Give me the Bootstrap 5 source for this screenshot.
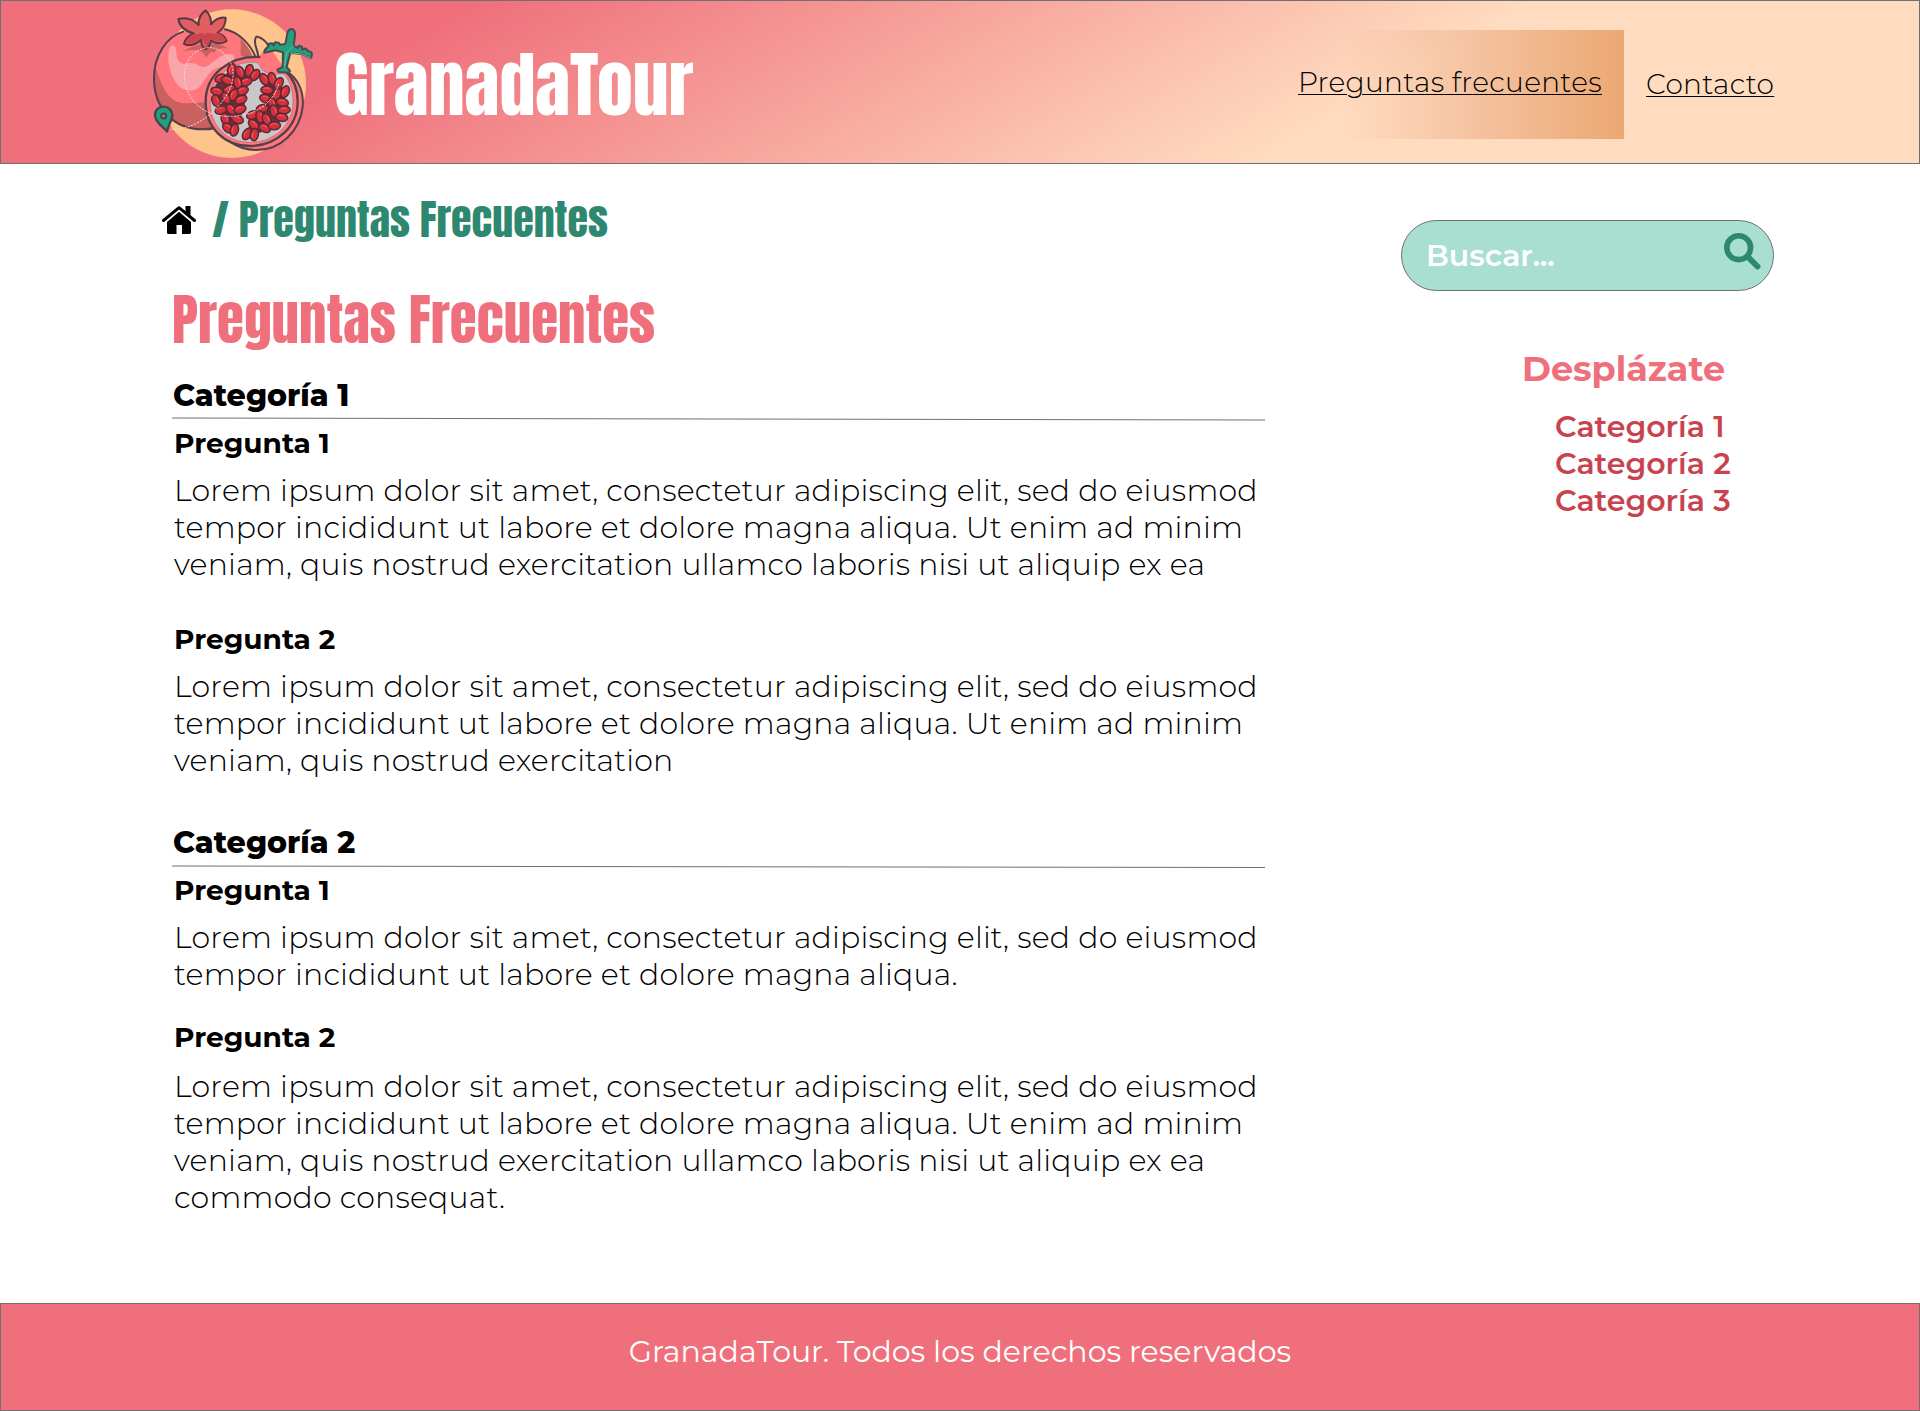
<!doctype html>
<html lang="es">
<head>
<meta charset="utf-8">
<meta name="viewport" content="width=device-width, initial-scale=1">
<title>GranadaTour - Preguntas Frecuentes</title>
<link href="https://cdn.jsdelivr.net/npm/bootstrap@5.3.0/dist/css/bootstrap.min.css" rel="stylesheet">
<style>
body{font-family:Montserrat,Inter,"Liberation Sans",sans-serif;font-size:30px;line-height:37px;color:#000;background:#fff;min-height:1411px}
.display-face{font-family:Anton,Roboto,"Liberation Sans",sans-serif;font-weight:400;white-space:nowrap}
.site-head{height:164px;border:1px solid #707070;background:linear-gradient(150deg,#ef707c 22%,#ffdcc0 70%);padding:0 145px 0 139px}
.brand-name{font-size:72px;line-height:100px;margin-left:4px;margin-top:6px}
.nav-item-box{font-size:28px;font-weight:300;letter-spacing:.3px;color:#000;text-decoration:underline;text-decoration-thickness:1px;text-underline-offset:2px;white-space:nowrap}
.nav-item-box:hover{color:#000}
.nav-on{height:109px;width:348px;padding:0 0 4px 22px;margin-top:5px;background:linear-gradient(90deg,rgba(236,170,130,0) 19%,rgba(236,172,132,.5) 55%,rgba(235,168,115,1))}
.nav-off{margin-left:22px;width:128px;margin-top:5px}
.page-main{height:1139px;padding:26px 146px 0 162px}
.faq-col{width:1103px}
.crumb{height:60px}
.crumb-text{font-size:42px;line-height:60px;color:#2e8870;margin-left:16px}
.page-title{font-size:55px;line-height:80px;color:#ef707c;margin:30px 0 17px -2px}
.faq-body{padding-left:12px}
.cat-title{font-size:30px;line-height:37px;font-weight:800;margin:0 0 0 -1px}
.cat-rule{display:block;margin:3px 0 4px -2px}
.q-title{font-size:28px;line-height:37px;font-weight:700;margin:0 0 10px}
.answer{margin:0;white-space:nowrap;font-weight:300;letter-spacing:.21px}
.answer span{display:block}
.side-col{width:373px;padding-top:30px}
.search-pill{height:71px;border:1px solid #707070;border-radius:36px;background:#a8dfd1;padding:0 12px 0 24px;color:#fff;font-weight:600}
.side-title{font-size:35px;line-height:44px;font-weight:700;color:#ef707c;margin:56px 0 17px 121px}
.side-list{margin:0 0 0 154px;font-weight:600}
.side-list a{color:#c8434f;text-decoration:none}
.site-foot{height:108px;border:1px solid #707070;background:#ef707c;color:#fff;padding-top:29px}
</style>
<script src="https://cdn.jsdelivr.net/npm/bootstrap@5.3.0/dist/js/bootstrap.bundle.min.js"></script>
</head>
<body>
<header class="site-head d-flex align-items-center justify-content-between">
  <a href="#" class="d-flex align-items-center text-white text-decoration-none">
    <svg width="190" height="164" viewBox="0 0 570 492" fill="none" stroke-linejoin="round" stroke-linecap="round">
      <defs>
        <clipPath id="fruitClip"><path d="M130 95C80 110 42 165 42 235C42 320 95 388 190 388C285 388 350 320 350 230C350 160 300 90 235 82Z"/></clipPath>
        <g id="seed"><ellipse rx="18.5" ry="12" fill="#d7303c" stroke="#5a2b35" stroke-width="4.5"/><path d="M-9 -4Q-2 -8 6 -5" stroke="#ec6269" stroke-width="3"/></g>
      </defs>
      <circle cx="275" cy="251" r="223" fill="#ffc48c"/>
      <g clip-path="url(#fruitClip)">
        <rect x="30" y="70" width="330" height="330" fill="#ff777c"/>
        <path d="M42 190C60 240 75 290 110 305C150 318 180 300 240 310L240 400L30 400Z" fill="#cb6061"/>
        <path d="M302 100L302 165L350 190L350 120Z" fill="#cb6061"/>
        <path d="M128 155C165 130 235 120 262 145C240 143 225 148 222 160C212 150 206 160 199 174C190 150 165 145 128 155Z" fill="#cb6061"/>
        <path d="M88 145C95 130 108 135 109 155C110 185 122 195 145 190C170 185 178 205 195 200C220 195 240 155 275 163C300 175 260 200 240 202C200 210 195 250 175 265C150 280 115 270 100 235C85 205 82 170 88 145Z" fill="#f9a5aa"/>
      </g>
      <path d="M130 95C80 110 42 165 42 235C42 320 95 388 190 388C215 388 230 385 250 378M255 88C295 97 330 130 346 170" stroke="#54404b" stroke-width="6"/>
      <path d="M355 172L384 135L440 215L380 240Z" fill="#ff777c"/>
      <path d="M354 170C356 158 345 142 345 125C345 112 349 109 352 110C364 112 378 124 384 135" stroke="#54404b" stroke-width="6"/>
      <path d="M440 215C475 235 492 275 488 320C480 395 420 450 350 450C320 450 295 443 270 425" fill="#ff777c" stroke="#54404b" stroke-width="6"/>
      <path d="M354 171C270 168 197 220 197 305C197 385 255 438 330 438C410 438 473 380 473 305C473 268 461 236 437 214C415 218 400 214 390 200C370 170 372 172 354 171Z" fill="#ff777c"/>
      <path d="M358 171C270 168 197 220 197 305C197 385 255 438 330 438C410 438 473 380 473 305C473 268 461 236 437 214" stroke="#54404b" stroke-width="7"/>
      <path d="M340 186C265 188 211 235 211 307C211 380 262 427 330 427C405 427 459 372 459 305C459 270 450 240 430 221C400 225 375 220 365 208C358 195 358 187 340 186Z" fill="#cbc6c9" stroke="#b8666f" stroke-width="2"/>
      <path d="M268 212Q300 200 342 222L322 258L312 330L290 385L262 385L238 340L225 300L226 255Z" fill="#6a2f3a"/>
      <path d="M372 240L405 236L432 270L436 340L410 380L340 405L318 400L342 345L378 318Z" fill="#6a2f3a"/>
      <g>
        <use href="#seed" transform="translate(275 209) rotate(-75)"/><use href="#seed" transform="translate(300 216) rotate(65)"/><use href="#seed" transform="translate(328 212) rotate(100)"/><use href="#seed" transform="translate(345 225) rotate(-55)"/>
        <use href="#seed" transform="translate(243 235) rotate(-20)"/><use href="#seed" transform="translate(262 241) rotate(20)"/><use href="#seed" transform="translate(318 245) rotate(-20)"/><use href="#seed" transform="translate(293 248) rotate(75)"/>
        <use href="#seed" transform="translate(231 274) rotate(15)"/><use href="#seed" transform="translate(267 268) rotate(-25)"/><use href="#seed" transform="translate(307 272) rotate(-20)"/><use href="#seed" transform="translate(228 302) rotate(70)"/>
        <use href="#seed" transform="translate(258 294) rotate(65)"/><use href="#seed" transform="translate(281 284) rotate(-65)"/><use href="#seed" transform="translate(303 299) rotate(-25)"/><use href="#seed" transform="translate(243 330) rotate(-20)"/>
        <use href="#seed" transform="translate(273 328) rotate(50)"/><use href="#seed" transform="translate(300 328) rotate(-20)"/><use href="#seed" transform="translate(256 357) rotate(75)"/><use href="#seed" transform="translate(292 358) rotate(20)"/>
        <use href="#seed" transform="translate(264 384) rotate(40)"/><use href="#seed" transform="translate(283 390) rotate(-75)"/>
        <use href="#seed" transform="translate(373 238) rotate(60)"/><use href="#seed" transform="translate(396 236) rotate(75)"/><use href="#seed" transform="translate(416 250) rotate(-60)"/><use href="#seed" transform="translate(381 270) rotate(5)"/>
        <use href="#seed" transform="translate(435 275) rotate(-65)"/><use href="#seed" transform="translate(410 283) rotate(-70)"/><use href="#seed" transform="translate(377 296) rotate(20)"/><use href="#seed" transform="translate(397 312) rotate(75)"/>
        <use href="#seed" transform="translate(427 307) rotate(15)"/><use href="#seed" transform="translate(432 330) rotate(-5)"/><use href="#seed" transform="translate(367 326) rotate(-15)"/><use href="#seed" transform="translate(402 333) rotate(75)"/>
        <use href="#seed" transform="translate(338 345) rotate(-20)"/><use href="#seed" transform="translate(360 350) rotate(80)"/><use href="#seed" transform="translate(380 358) rotate(65)"/><use href="#seed" transform="translate(425 352) rotate(10)"/>
        <use href="#seed" transform="translate(341 374) rotate(45)"/><use href="#seed" transform="translate(374 384) rotate(25)"/><use href="#seed" transform="translate(403 377) rotate(-5)"/><use href="#seed" transform="translate(321 402) rotate(-60)"/><use href="#seed" transform="translate(343 404) rotate(-80)"/>
      </g>
      <path d="M197 31C209 43 214 58 213 73C226 57 242 51 257 53C258 72 247 89 232 99C246 102 256 112 260 123C246 133 227 131 213 122C211 131 205 142 198 148C187 142 183 131 183 119C168 137 147 138 132 132C134 117 147 104 162 101C138 94 118 79 115 57C136 52 159 57 176 75C174 58 183 41 197 31Z" fill="#e15e63" stroke="#5a3842" stroke-width="6"/>
      <path d="M162 101C177 108 184 90 194 104C205 91 217 106 232 99C246 102 252 111 258 121C243 127 227 124 213 117L199 142L185 114C170 130 150 133 137 129C140 116 150 106 162 101Z" fill="#ca464d"/>
      <path d="M95 388C170 390 248 325 274 256C296 185 244 140 205 143C160 146 132 185 133 230C137 300 190 350 270 349C350 347 398 310 416 252" stroke="#f9d5d5" stroke-width="3" stroke-dasharray="4 6"/>
      <path d="M453 87Q467 87 465 108L461 137L474 144L476 137L486 140L487 149L497 145L504 153Q519 155 515 168L513 175L488 162L451 159L440 201L450 213L447 218L416 216L412 209L428 201L429 157L406 151L373 158Q372 148 386 139L386 131L397 130L401 136L405 127L416 128L420 134L436 132L441 106Q443 89 453 87Z" fill="#239f7e" stroke="#474c50" stroke-width="6"/>
      <path d="M461 137L440 158L433 199M451 159L488 162L513 175" stroke="#65cbae" stroke-width="2.5"/>
      <path d="M81 395C72 382 45 369 45 345C45 329 57 320 71 320C86 320 97 331 97 346C97 363 83 376 81 395Z" fill="#239f7e" stroke="#47454c" stroke-width="7"/>
      <circle cx="71" cy="348" r="8" fill="#ca6262" stroke="#39464b" stroke-width="5"/>
    </svg>
    <span class="display-face brand-name">GranadaTour</span>
  </a>
  <nav class="d-flex align-items-center">
    <a href="#" class="nav-item-box nav-on d-flex align-items-center">Preguntas frecuentes</a>
    <a href="#" class="nav-item-box nav-off">Contacto</a>
  </nav>
</header>
<main class="page-main d-flex justify-content-between align-items-start">
  <section class="faq-col">
    <div class="crumb d-flex align-items-center">
      <svg width="34" height="28" viewBox="0 0 34 28"><path d="M17 5.800L29 16V26.500Q29 28 27.500 28H20V19H14.500V28H6.500Q5 28 5 26.500V16Z"/><path d="M1.500 14.500L17 1.700L32.500 14.500" fill="none" stroke="#000" stroke-width="3" stroke-linecap="round" stroke-linejoin="round"/><path d="M23.500 0H28.500V11L23.500 7Z"/></svg>
      <span class="display-face crumb-text">/ Preguntas Frecuentes</span>
    </div>
    <div class="faq-body">
      <h1 class="display-face page-title">Preguntas Frecuentes</h1>
      <h2 class="cat-title">Categoría 1</h2>
      <svg class="cat-rule" width="1093" height="4"><path d="M0 1L1093 3" stroke="#707070"/></svg>
      <h3 class="q-title">Pregunta 1</h3>
      <p class="answer"><span>Lorem ipsum dolor sit amet, consectetur adipiscing elit, sed do eiusmod</span><span>tempor incididunt ut labore et dolore magna aliqua. Ut enim ad minim</span><span>veniam, quis nostrud exercitation ullamco laboris nisi ut aliquip ex ea</span></p>
      <h3 class="q-title" style="margin-top:38px">Pregunta 2</h3>
      <p class="answer"><span>Lorem ipsum dolor sit amet, consectetur adipiscing elit, sed do eiusmod</span><span>tempor incididunt ut labore et dolore magna aliqua. Ut enim ad minim</span><span>veniam, quis nostrud exercitation</span></p>
      <h2 class="cat-title" style="margin-top:45px">Categoría 2</h2>
      <svg class="cat-rule" width="1093" height="4"><path d="M0 2L1093 3.500" stroke="#707070"/></svg>
      <h3 class="q-title">Pregunta 1</h3>
      <p class="answer"><span>Lorem ipsum dolor sit amet, consectetur adipiscing elit, sed do eiusmod</span><span>tempor incididunt ut labore et dolore magna aliqua.</span></p>
      <h3 class="q-title" style="margin-top:26px;margin-bottom:12px">Pregunta 2</h3>
      <p class="answer"><span>Lorem ipsum dolor sit amet, consectetur adipiscing elit, sed do eiusmod</span><span>tempor incididunt ut labore et dolore magna aliqua. Ut enim ad minim</span><span>veniam, quis nostrud exercitation ullamco laboris nisi ut aliquip ex ea</span><span>commodo consequat.</span></p>
    </div>
  </section>
  <aside class="side-col">
    <div class="search-pill d-flex align-items-center justify-content-between">
      <span>Buscar...</span>
      <svg width="37" height="37" viewBox="0 0 37 37" fill="none" stroke="#2e8870" class="mb-2"><circle cx="14.700" cy="14.700" r="11.900" stroke-width="5.600"/><path d="M24 24L33.500 33.500" stroke-width="6" stroke-linecap="round"/></svg>
    </div>
    <h2 class="side-title">Desplázate</h2>
    <ul class="side-list list-unstyled">
      <li><a href="#">Categoría 1</a></li>
      <li><a href="#">Categoría 2</a></li>
      <li><a href="#">Categoría 3</a></li>
    </ul>
  </aside>
</main>
<footer class="site-foot text-center">GranadaTour. Todos los derechos reservados</footer>
</body>
</html>
